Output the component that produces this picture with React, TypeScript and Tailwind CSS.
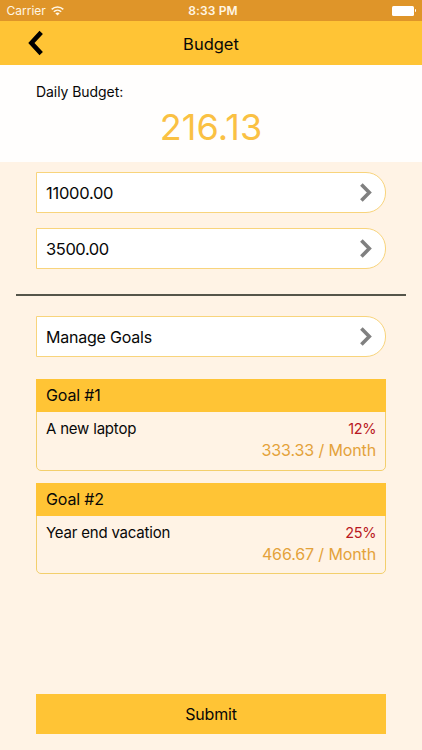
import React from 'react';

function Chevron() {
  return (
    <svg width="12" height="19" viewBox="0 0 12 19" fill="none" stroke="#808080" strokeWidth="3.6" className="block">
      <path d="M1.4 1.4 L9.3 9.5 L1.4 17.6" />
    </svg>
  );
}

function LinkRow({ label, track }: { label: string; track: string }) {
  return (
    <button className="flex h-[41px] w-full items-center justify-between rounded-r-[20px] border border-[#f8d47c] bg-white pr-[13px] pl-[9px] leading-none">
      <span className={track}>{label}</span>
      <Chevron />
    </button>
  );
}

interface Goal {
  title: string;
  name: string;
  percent: string;
  monthly: string;
}

const goals: Goal[] = [
  { title: 'Goal #1', name: 'A new laptop', percent: '12%', monthly: '333.33 / Month' },
  { title: 'Goal #2', name: 'Year end vacation', percent: '25%', monthly: '466.67 / Month' },
];

function GoalCard({ goal }: { goal: Goal }) {
  return (
    <section className="h-[91.5px] rounded-b-[5px] border border-[#f3cf6c]">
      <h2 className="-mx-px -mt-px flex h-[33px] items-center bg-[#ffc435] pb-px pl-[10px] text-[16px] leading-none tracking-[-0.15px]">
        {goal.title}
      </h2>
      <div className="flex justify-between pt-[6px] pr-[9px] pl-[9px]">
        <span className="text-[15px] leading-[22px] tracking-[-0.2px]">{goal.name}</span>
        <div className="text-right">
          <div className="text-[14.5px] leading-[21px] tracking-[-0.4px] text-[#b91822]">{goal.percent}</div>
          <div className="text-[16px] leading-[22px] tracking-[-0.12px] text-[#e4a23a]">{goal.monthly}</div>
        </div>
      </div>
    </section>
  );
}

export default function App() {
  return (
    <div className="flex h-[750px] w-[422px] flex-col overflow-hidden bg-[#fff3e5] font-['Inter','Liberation_Sans',sans-serif] text-[#080808]">
      <div className="grid h-[21px] shrink-0 grid-cols-3 items-center bg-[#df9529] text-[12px] leading-none text-[#fff6e4]">
        <div className="flex items-center gap-[5px] pl-[6.5px]">
          <span>Carrier</span>
          <svg width="13" height="10" viewBox="0 0 13 10" fill="none" stroke="#fff6e4" strokeWidth="1.5">
            <path d="M.7 3.4 C3.9.2 9.1.2 12.3 3.4" />
            <path d="M2.8 5.7 C4.9 3.6 8.1 3.6 10.2 5.7" />
            <path d="M4.3 7.3 Q6.5 5.5 8.7 7.3 L6.5 9.6Z" fill="#fff6e4" stroke="none" />
          </svg>
        </div>
        <span className="pl-[4px] text-center font-semibold tracking-[0.15px]">8:33 PM</span>
        <div className="flex items-center justify-end pr-[6px]">
          <div className="h-[10px] w-[22.5px] rounded-[1.5px] bg-white" />
          <div className="ml-[.7px] h-[3px] w-[1.3px] rounded-r bg-white" />
        </div>
      </div>
      <header className="grid h-[44px] shrink-0 grid-cols-[60px_1fr_60px] items-center bg-[#ffc435]">
        <svg width="16" height="26" viewBox="0 0 16 26" fill="none" stroke="#000" strokeWidth="4.6" className="ml-[28px]">
          <path d="M13.2 2.4 L3.4 13 L13.2 23.6" />
        </svg>
        <h1 className="pt-[2px] text-center text-[16.5px] leading-none">Budget</h1>
      </header>
      <section className="h-[97px] shrink-0 bg-[#fffefd] px-[36px] pt-[18px]">
        <div className="text-[14px] leading-[18px] tracking-[-0.06px]">Daily Budget:</div>
        <div className="mt-[5px] text-center text-[36px] leading-[42px] tracking-[0.15px] text-[#fac143]">216.13</div>
      </section>
      <main className="flex flex-1 flex-col px-[36px] pt-[10px] pb-[16px]">
        <div className="flex flex-col gap-[15px]">
          <LinkRow label="11000.00" track="pt-[2px] text-[16.5px] tracking-[-0.27px]" />
          <LinkRow label="3500.00" track="pt-[2px] text-[16.5px] tracking-[-0.42px]" />
        </div>
        <div className="-mx-[20px] mt-[25px] h-[1.5px] bg-[#55554a]" />
        <div className="mt-[20.5px]">
          <LinkRow label="Manage Goals" track="text-[16px] tracking-[-0.22px]" />
        </div>
        <div className="mt-[22px] flex flex-col gap-[12px]">
          {goals.map((goal) => (
            <GoalCard key={goal.title} goal={goal} />
          ))}
        </div>
        <button className="mt-auto h-[40px] bg-[#ffc435] text-[16px] leading-none tracking-[-0.15px]">Submit</button>
      </main>
    </div>
  );
}
